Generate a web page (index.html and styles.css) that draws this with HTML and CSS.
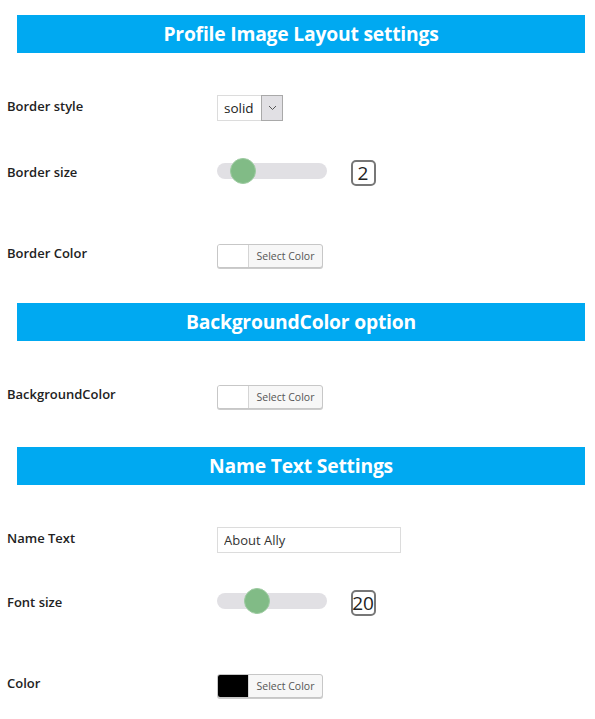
FILE: index.html
```html
<!DOCTYPE html>
<html>
<head>
<meta charset="utf-8">
<link rel="stylesheet" href="styles.css">
</head>
<body>
<div class="page">
  <section class="section">
    <h2 class="section-title">Profile Image Layout settings</h2>
    <div class="row">
      <label class="label">Border style</label>
      <div class="select">
        <span class="select-value">solid</span>
        <span class="select-arrow"><svg width="9" height="6" viewBox="0 0 9 6"><path d="M1 1 L4.5 4.5 L8 1" fill="none" stroke="#555" stroke-width="1"/></svg></span>
      </div>
    </div>
    <div class="row row-slider">
      <label class="label">Border size</label>
      <div class="slider-group">
        <input class="slider" type="range" min="0" max="13" value="2">
        <span class="num-box">2</span>
      </div>
    </div>
    <div class="row">
      <label class="label">Border Color</label>
      <button class="color-btn"><span class="swatch"></span><span class="color-text">Select Color</span></button>
    </div>
  </section>

  <section class="section section-single">
    <h2 class="section-title">BackgroundColor option</h2>
    <div class="row">
      <label class="label">BackgroundColor</label>
      <button class="color-btn"><span class="swatch"></span><span class="color-text">Select Color</span></button>
    </div>
  </section>

  <section class="section">
    <h2 class="section-title">Name Text Settings</h2>
    <div class="row row-first-input">
      <label class="label">Name Text</label>
      <input class="text-input" type="text" value="About Ally">
    </div>
    <div class="row row-slider">
      <label class="label">Font size</label>
      <div class="slider-group">
        <input class="slider" type="range" min="0" max="62" value="20">
        <span class="num-box">20</span>
      </div>
    </div>
    <div class="row">
      <label class="label">Color</label>
      <button class="color-btn"><span class="swatch swatch-black"></span><span class="color-text">Select Color</span></button>
    </div>
  </section>
</div>
</body>
</html>
```

FILE: styles.css
```css
* { box-sizing: border-box; }
html, body { margin: 0; padding: 0; background: #fff; }
body {
  font-family: "Open Sans", "Noto Sans", sans-serif;
  color: #222;
}
.page {
  padding: 15px 10px 0 7px;
}
.section { margin-bottom: 28px; }
.section-single { margin-bottom: 31px; }
.section-title {
  margin: 0 0 35px 10px;
  height: 38px;
  background: #00a9f1;
  color: #fff;
  font-size: 19.3px;
  font-weight: 700;
  line-height: 38px;
  text-align: center;
  letter-spacing: -0.2px;
}
.row {
  display: grid;
  grid-template-columns: 210px 1fr;
  align-items: center;
  height: 40px;
  margin-bottom: 23px;
}
.row:last-child { margin-bottom: 0; }
.row-slider { margin-bottom: 44px; }
.row-first-input { margin-top: 3px; margin-bottom: 21px; }
.label {
  font-size: 13px;
  font-weight: 600;
  color: #222;
  margin-top: -4px;
}
.row-slider .label { margin-top: 2px; }
.select {
  display: flex;
  width: 66px;
  height: 26px;
  border: 1px solid #dcdcdc;
  background: #fff;
}
.select-value {
  flex: 1;
  font-size: 13.5px;
  line-height: 24px;
  padding-left: 6px;
  color: #222;
}
.select-arrow {
  width: 22px;
  margin: -1px -1px -1px 0;
  background: #e1e0e4;
  border: 1px solid #a9a9a9;
  display: flex;
  align-items: center;
  justify-content: center;
}
.slider-group {
  display: flex;
  align-items: center;
  gap: 24px;
}
.slider {
  -webkit-appearance: none;
  appearance: none;
  width: 110px;
  height: 16px;
  margin: 0;
  background: #e1e0e4;
  border-radius: 8px;
  outline: none;
}
.slider::-webkit-slider-thumb {
  -webkit-appearance: none;
  appearance: none;
  width: 26px;
  height: 26px;
  border-radius: 50%;
  background: #81bb86;
  border: 1px solid #9ccaa0;
}
.num-box {
  display: inline-block;
  width: 25px;
  height: 26px;
  margin-top: 4px;
  border: 2px solid #777;
  border-radius: 5px;
  font-size: 19px;
  line-height: 22px;
  text-align: center;
  color: #222;
  overflow: visible;
  white-space: nowrap;
  text-indent: -1px;
}
.color-btn {
  display: flex;
  width: 106px;
  height: 24px;
  padding: 0;
  border: 1px solid #c7c7c7;
  border-radius: 3px;
  background: #f7f7f7;
  box-shadow: 0 1px 0 #cccccc;
  overflow: hidden;
  font-family: inherit;
  margin-top: 2px;
}
.swatch {
  width: 31px;
  height: 100%;
  background: #fff;
  border-right: 1px solid #d5d5d5;
}
.swatch-black { background: #000; }
.color-text {
  flex: 1;
  font-size: 10.5px;
  line-height: 22px;
  color: #555;
  text-align: center;
}
.text-input {
  width: 184px;
  height: 26px;
  border: 1px solid #dcdcdc;
  padding: 0 6px;
  font-family: inherit;
  font-size: 13px;
  color: #333;
  outline: none;
}
```
